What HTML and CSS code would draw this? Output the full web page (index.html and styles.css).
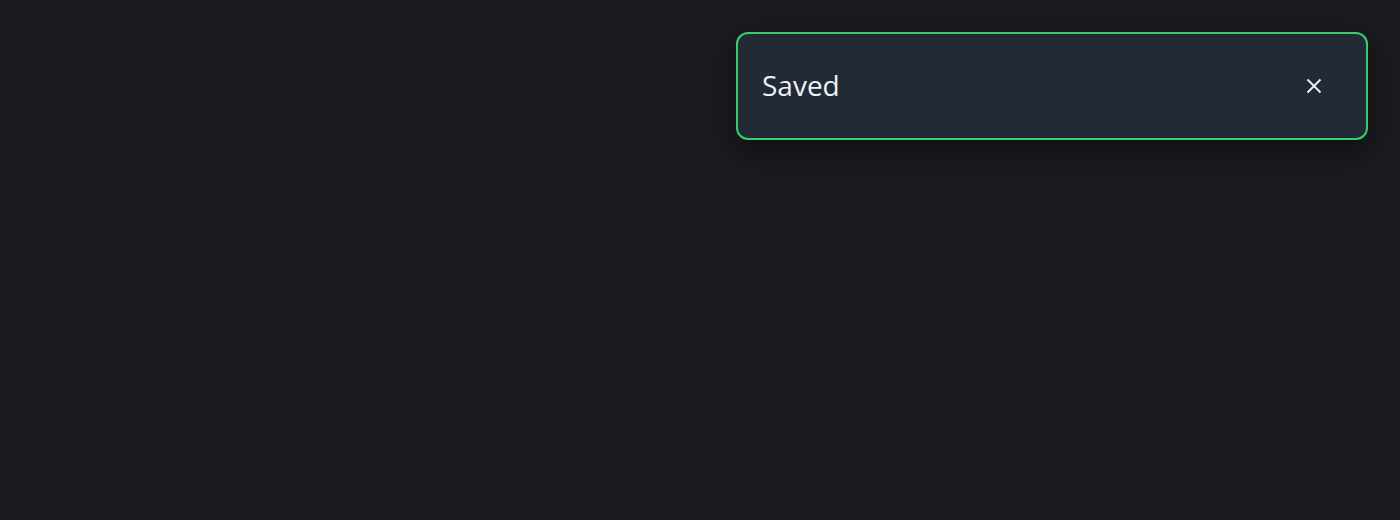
FILE: index.html
```html
<!DOCTYPE html>
<html>
<head>
<meta charset="utf-8">
<link rel="stylesheet" href="styles.css">
</head>
<body>
<div class="stack">
  <div class="toast" role="status">
    <span class="msg">Saved</span>
    <button class="close" aria-label="Close">
      <svg width="16" height="16" viewBox="0 0 16 16"><path d="M1.5 1.5L14.5 14.5M14.5 1.5L1.5 14.5" stroke="#eef1f5" stroke-width="1.9" stroke-linecap="butt"/></svg>
    </button>
  </div>
</div>
</body>
</html>
```
FILE: styles.css
```css
html, body { margin: 0; height: 100%; }
body {
  background: #191b1f;
  font-family: "Open Sans", "Noto Sans", sans-serif;
}
.stack {
  display: flex;
  justify-content: flex-end;
  padding: 32px 32px 0 0;
}
.toast {
  box-sizing: border-box;
  width: 632px;
  height: 108px;
  background: #222a36;
  border: 2px solid #3ccb6e;
  border-radius: 12px;
  display: flex;
  align-items: center;
  justify-content: space-between;
  padding: 0 44px 2px 24px;
  box-shadow: 0 10px 30px rgba(0,0,0,0.45);
}
.msg {
  color: #eef1f5;
  font-size: 28px;
}
.close {
  background: none;
  border: 0;
  padding: 0;
  margin-top: 2px;
  width: 16px;
  height: 16px;
  display: flex;
}
```
